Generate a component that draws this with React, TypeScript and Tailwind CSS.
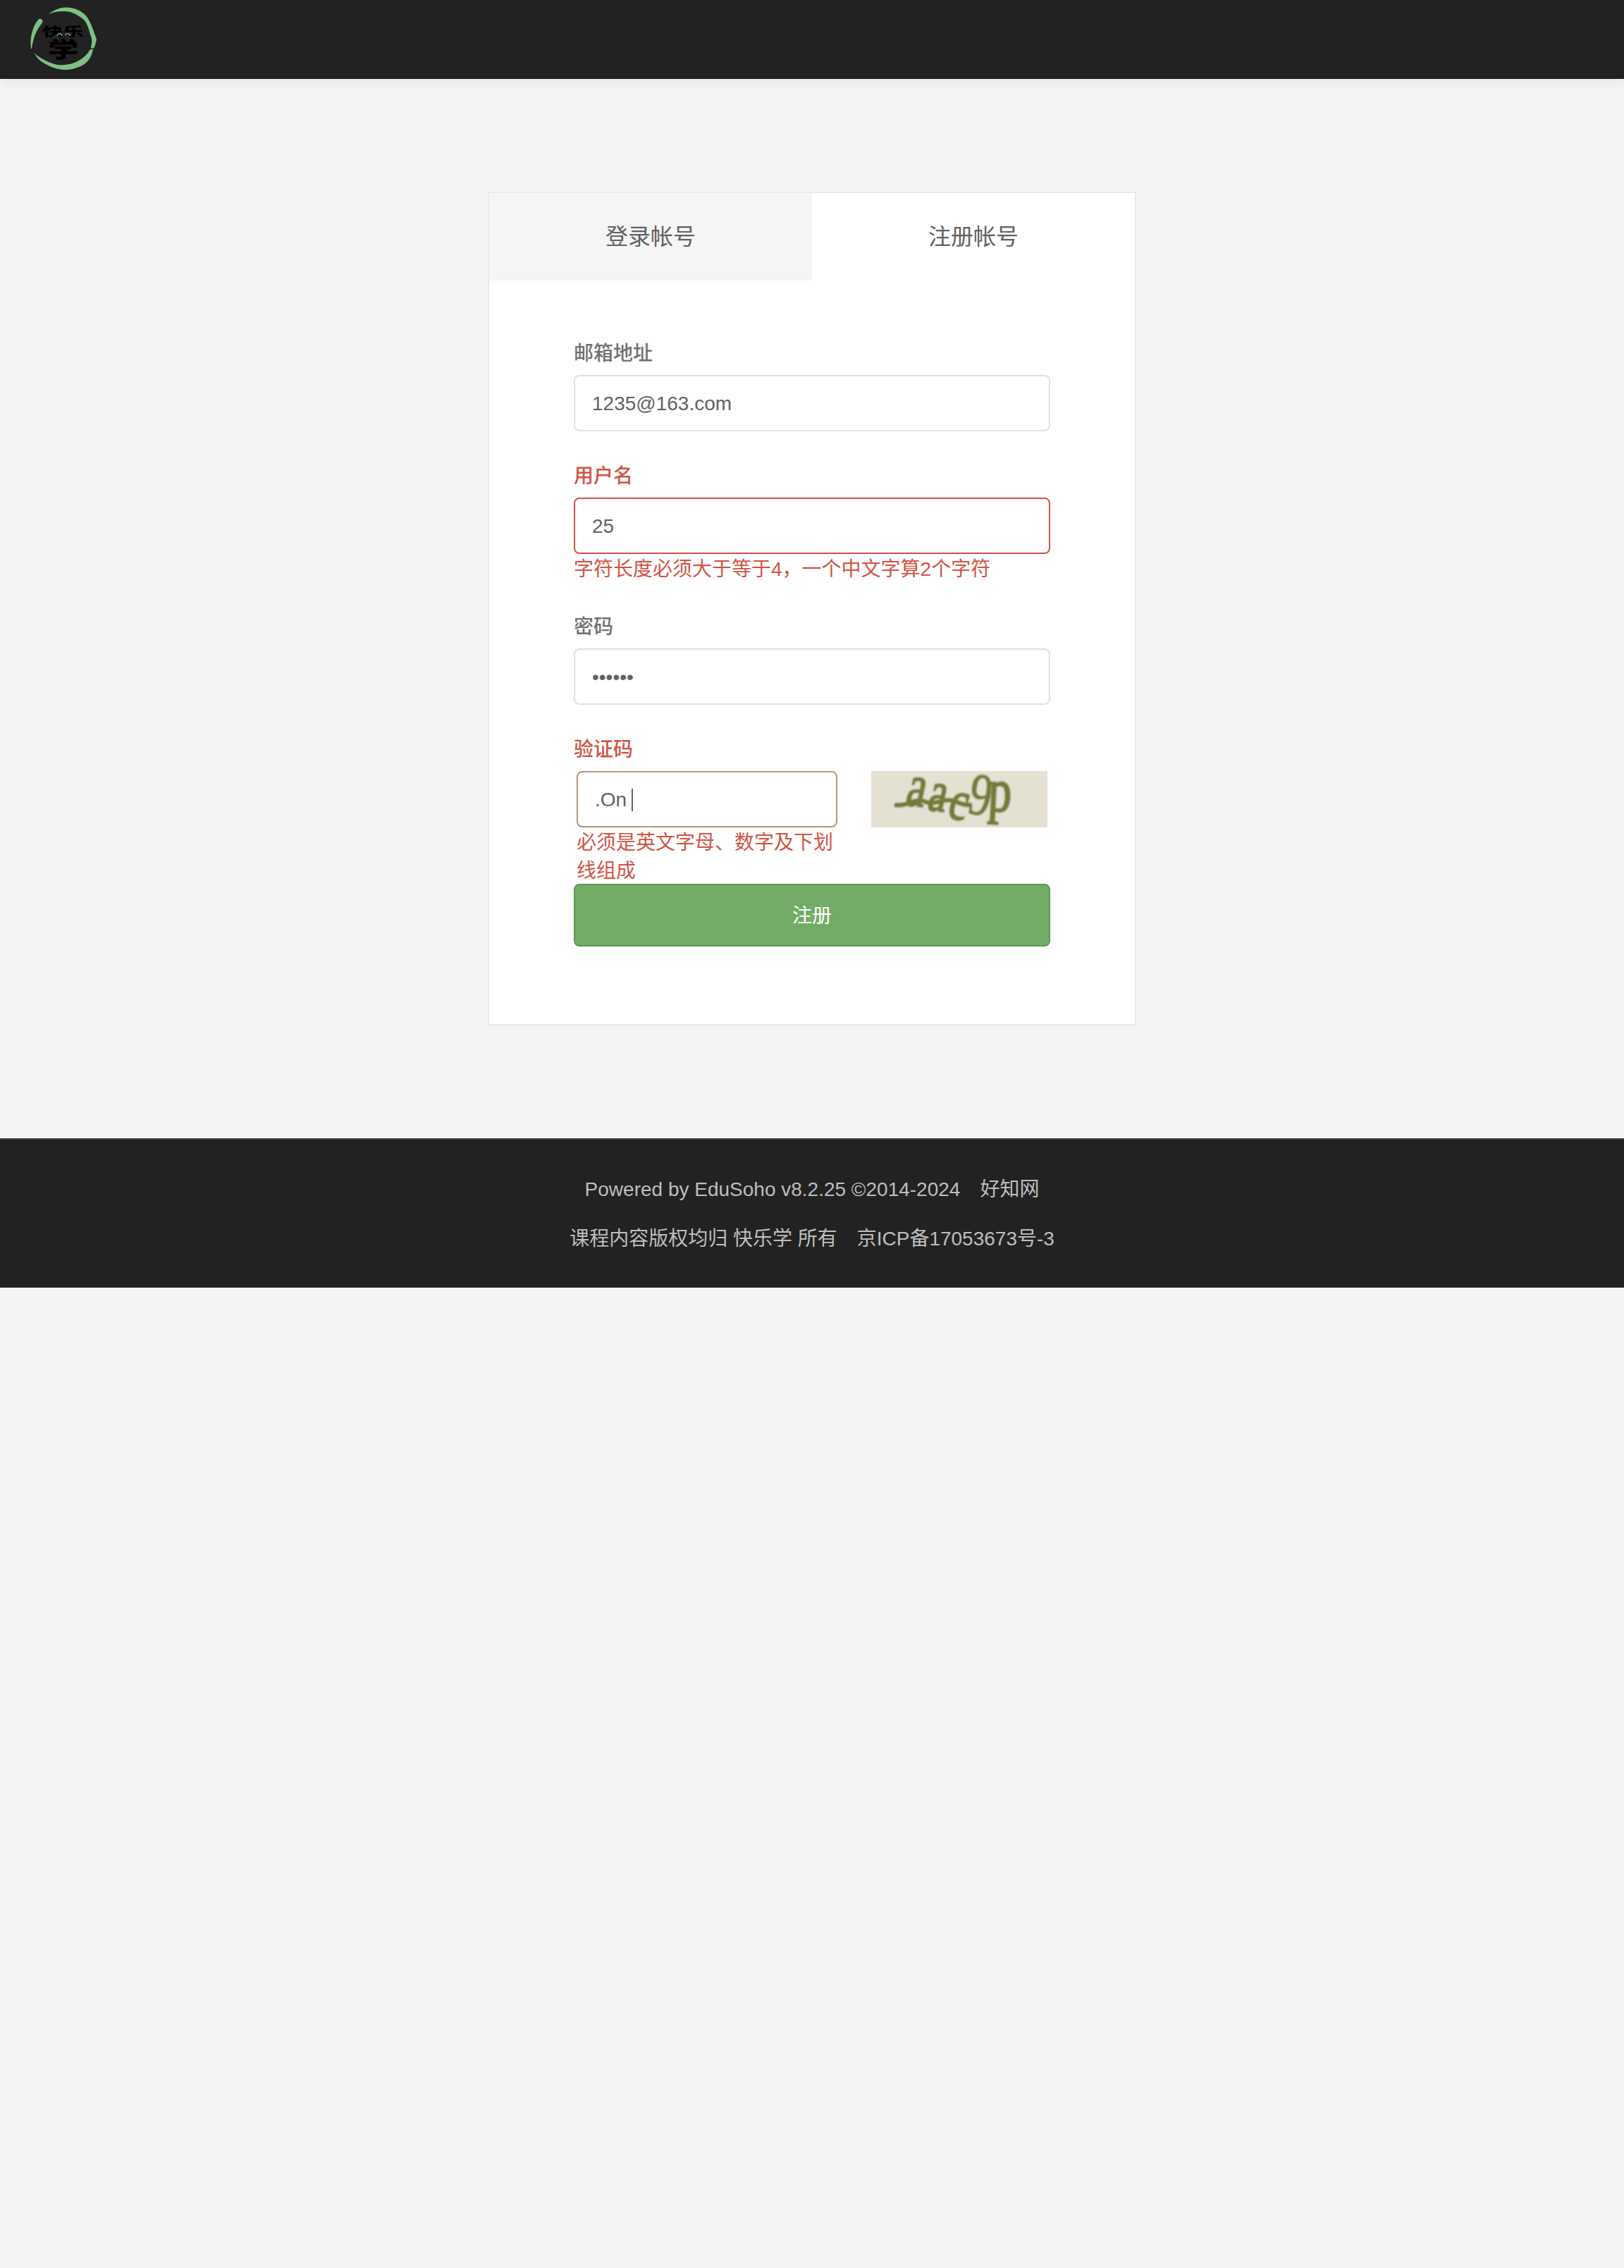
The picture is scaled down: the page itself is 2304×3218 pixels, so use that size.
import type { ReactNode } from "react";

function Logo() {
  return (
    <svg width="96" height="92" viewBox="0 0 96 92" className="block overflow-visible" aria-label="快乐学">
      <g fill="#7dc184">
        <path d="M27 12 C37 4 48 1 58 3 C71 5 80 12 85 22 C89 30 91 37 93 42 L95 48 L93 56 C92 60 90 62 87 60 L88 53 C89 49 88 46 86 41 C84 32 81 25 78 21 C74 17 66 12 58 9 C48 7 36 8 27 12 Z" />
        <path d="M86 62 L90 62 C88 75 79 85 67 88 C56 93 38 92 25 84 C15 79 10 74 9 71 L6 67 C15 75 24 79 35 83 C47 86 60 83 68 79 C77 74 82 69 86 62 Z" />
        <path d="M12 20 C15 17 20 20 18 24 C10 35 6 42 3 61 L2 61 C0 46 4 30 12 20 Z" />
      </g>
      <g fill="#000" stroke="#000" strokeLinejoin="round" className="font-['Noto_Sans_CJK_SC',sans-serif] font-bold">
        <text strokeWidth=".3" fontSize="17" transform="translate(18 42.5) scale(1.72 1)">快乐</text>
        <text strokeWidth=".8" fontSize="30" transform="translate(26.500 73) scale(1.42 1)">学</text>
      </g>
      <path d="M39 43 C40 38.500 45 38.500 46 43 M50.500 43 C51.500 38.500 56.500 38.500 57.500 43" fill="none" stroke="#7dc184" strokeWidth="1.2" />
    </svg>
  );
}

function Label({ children, error }: { children: ReactNode; error?: boolean }) {
  return (
    <div className={`mb-[10px] h-[40px] font-medium leading-[40px] ${error ? "text-[#d15344]" : "text-[#707070]"}`}>
      {children}
    </div>
  );
}

function Field({ children, border }: { children: ReactNode; border: string }) {
  return (
    <div className={`flex h-[80px] items-center whitespace-pre rounded-[8px] border-2 bg-white px-[24px] pt-px ${border}`}>
      {children}
    </div>
  );
}

function ErrorText({ children }: { children: ReactNode }) {
  return <p className="-mb-[2px] pt-[2px] text-[#d15344]">{children}</p>;
}

function Captcha() {
  return (
    <svg width="250" height="80" viewBox="0 0 250 80" className="block overflow-visible bg-[#e4e0d2]">
      <g fill="#737a3c" stroke="#737a3c" strokeWidth="1.5" className="font-['Liberation_Serif',serif] blur-[0.8px]">
        <text fontSize="61" transform="translate(47 48) rotate(6) skewX(-6) scale(1 1.4)">a</text>
        <text fontSize="57" transform="translate(78 55) rotate(6) skewX(-6) scale(1.02 1.42)">a</text>
        <text fontSize="60" transform="translate(106 66) rotate(9) skewX(-6) scale(1 1.32)">c</text>
        <text fontSize="76" transform="translate(135 59) rotate(10) scale(.83 1.12)" strokeWidth="1">9</text>
        <text fontSize="66" transform="translate(165 56) rotate(3) scale(1 1.32)" strokeWidth="1.800">p</text>
        <path d="M33 48 C52 51 58 38 75 43 C91 50 101 37 119 43 C130 48 137 49 143 48" fill="none" strokeWidth="6" />
      </g>
    </svg>
  );
}

export default function App() {
  return (
    <div className="flex min-h-[3218px] flex-col bg-[#f4f4f4] font-['Liberation_Sans','Noto_Sans_CJK_SC',sans-serif] text-[28px] leading-[40px] text-[#616161]">
      <header className="h-[112px] bg-[#222] pl-[42px] pt-[8px] shadow-[0_2px_20px_rgba(0,0,0,0.08)]">
        <Logo />
      </header>

      <main className="mx-auto mt-[160px] h-[1183px] w-[920px] border-2 border-[#e6ebf2] bg-white">
        <div className="flex h-[124px] text-[32px]">
          <div className="flex flex-1 items-center justify-center bg-[#f5f5f5]">登录帐号</div>
          <div className="flex flex-1 items-center justify-center">注册帐号</div>
        </div>
        <form className="px-[120px] pt-[84px]">
          <div className="mb-[44px]">
            <Label>邮箱地址</Label>
            <Field border="border-[#e1e1e1]">1235@163.com</Field>
          </div>
          <div className="mb-[44px]">
            <Label error>用户名</Label>
            <Field border="border-[#d15344]">25</Field>
            <ErrorText>字符长度必须大于等于4，一个中文字算2个字符</ErrorText>
          </div>
          <div className="mb-[44px]">
            <Label>密码</Label>
            <Field border="border-[#e1e1e1]">••••••</Field>
          </div>
          <Label error>验证码</Label>
          <div className="flex justify-between px-[4px]">
            <div className="w-[370px]">
              <Field border="border-[#b8957d]">
                .On<span className="ml-[7px] h-[32px] w-[2px] bg-[#616161]" />
              </Field>
              <ErrorText>必须是英文字母、数字及下划线组成</ErrorText>
            </div>
            <Captcha />
          </div>
          <button type="button" className="block h-[89px] w-full rounded-[8px] border-2 border-[#5f9559] bg-[#73ac66] pt-[2px] text-white">
            注册
          </button>
        </form>
      </main>

      <footer className="mt-[160px] flex h-[212px] flex-col items-center gap-[30px] border-t-2 border-[#444] bg-[#222] pt-[51px] text-[#bebebe]">
        <p className="whitespace-pre">Powered by EduSoho v8.2.25 ©2014-2024<span className="ml-[28px]">好知网</span></p>
        <p className="whitespace-pre">课程内容版权均归 快乐学 所有<span className="ml-[28px]">京ICP备17053673号-3</span></p>
      </footer>
    </div>
  );
}
